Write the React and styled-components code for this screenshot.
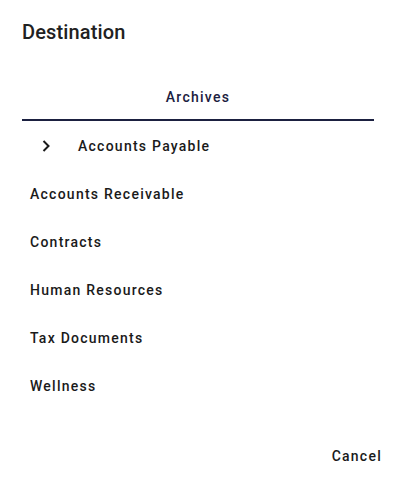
import React from "react";
import styled, { createGlobalStyle } from "styled-components";

const Global = createGlobalStyle`
  html, body { margin: 0; padding: 0; background: #fff; }
  body { font-family: Roboto, "Noto Sans", Arial, sans-serif; -webkit-font-smoothing: antialiased; }
`;

const Dialog = styled.div`
  width: 396px;
  height: 479px;
  box-sizing: border-box;
  display: flex;
  flex-direction: column;
  background: #fff;
`;

const Title = styled.h2`
  margin: 0;
  padding: 16px 22px 0;
  height: 56px;
  box-sizing: border-box;
  font-size: 20px;
  font-weight: 500;
  line-height: 32px;
  color: #212121;
  letter-spacing: 0.15px;
`;

const Tabs = styled.div`
  margin: 16px 22px 0;
  display: flex;
`;

const Tab = styled.button`
  flex: 1;
  height: 49px;
  padding: 2px 0 0;
  border: none;
  background: none;
  border-bottom: 2px solid #1b2040;
  font-family: Roboto, sans-serif;
  font-size: 14px;
  font-weight: 500;
  letter-spacing: 1.25px;
  color: #1b2040;
`;

const List = styled.ul`
  list-style: none;
  margin: 0;
  padding: 0 0 0 30px;
`;

const Item = styled.li`
  height: 48px;
  display: flex;
  align-items: center;
  padding-top: 1px;
  box-sizing: border-box;
  font-size: 14px;
  font-weight: 500;
  letter-spacing: 1.25px;
  color: #1a1a1a;
  padding-left: ${(p) => (p.$nested ? "4px" : "0")};
`;

const Expander = styled.span`
  width: 24px;
  height: 24px;
  display: inline-flex;
  align-items: center;
  justify-content: center;
  margin-right: 20px;
`;

const Actions = styled.div`
  margin-top: auto;
  display: flex;
  justify-content: flex-end;
  padding: 0 6px 5px;
`;

const TextButton = styled.button`
  height: 36px;
  padding: 0 8px;
  border: none;
  background: none;
  font-family: Roboto, sans-serif;
  font-size: 14px;
  font-weight: 500;
  letter-spacing: 1.25px;
  color: #1a1a1a;
`;

const Chevron = () => (
  <svg width="24" height="24" viewBox="0 0 24 24">
    <path d="M9.5 7l5 5-5 5" fill="none" stroke="#1a1a1a" strokeWidth="2" />
  </svg>
);

const items = ["Accounts Receivable", "Contracts", "Human Resources", "Tax Documents", "Wellness"];

export default function App() {
  return (
    <>
      <Global />
      <Dialog>
        <Title>Destination</Title>
        <Tabs>
          <Tab>Archives</Tab>
        </Tabs>
        <List>
          <Item $nested>
            <Expander>
              <Chevron />
            </Expander>
            Accounts Payable
          </Item>
          {items.map((t) => (
            <Item key={t}>{t}</Item>
          ))}
        </List>
        <Actions>
          <TextButton>Cancel</TextButton>
        </Actions>
      </Dialog>
    </>
  );
}
